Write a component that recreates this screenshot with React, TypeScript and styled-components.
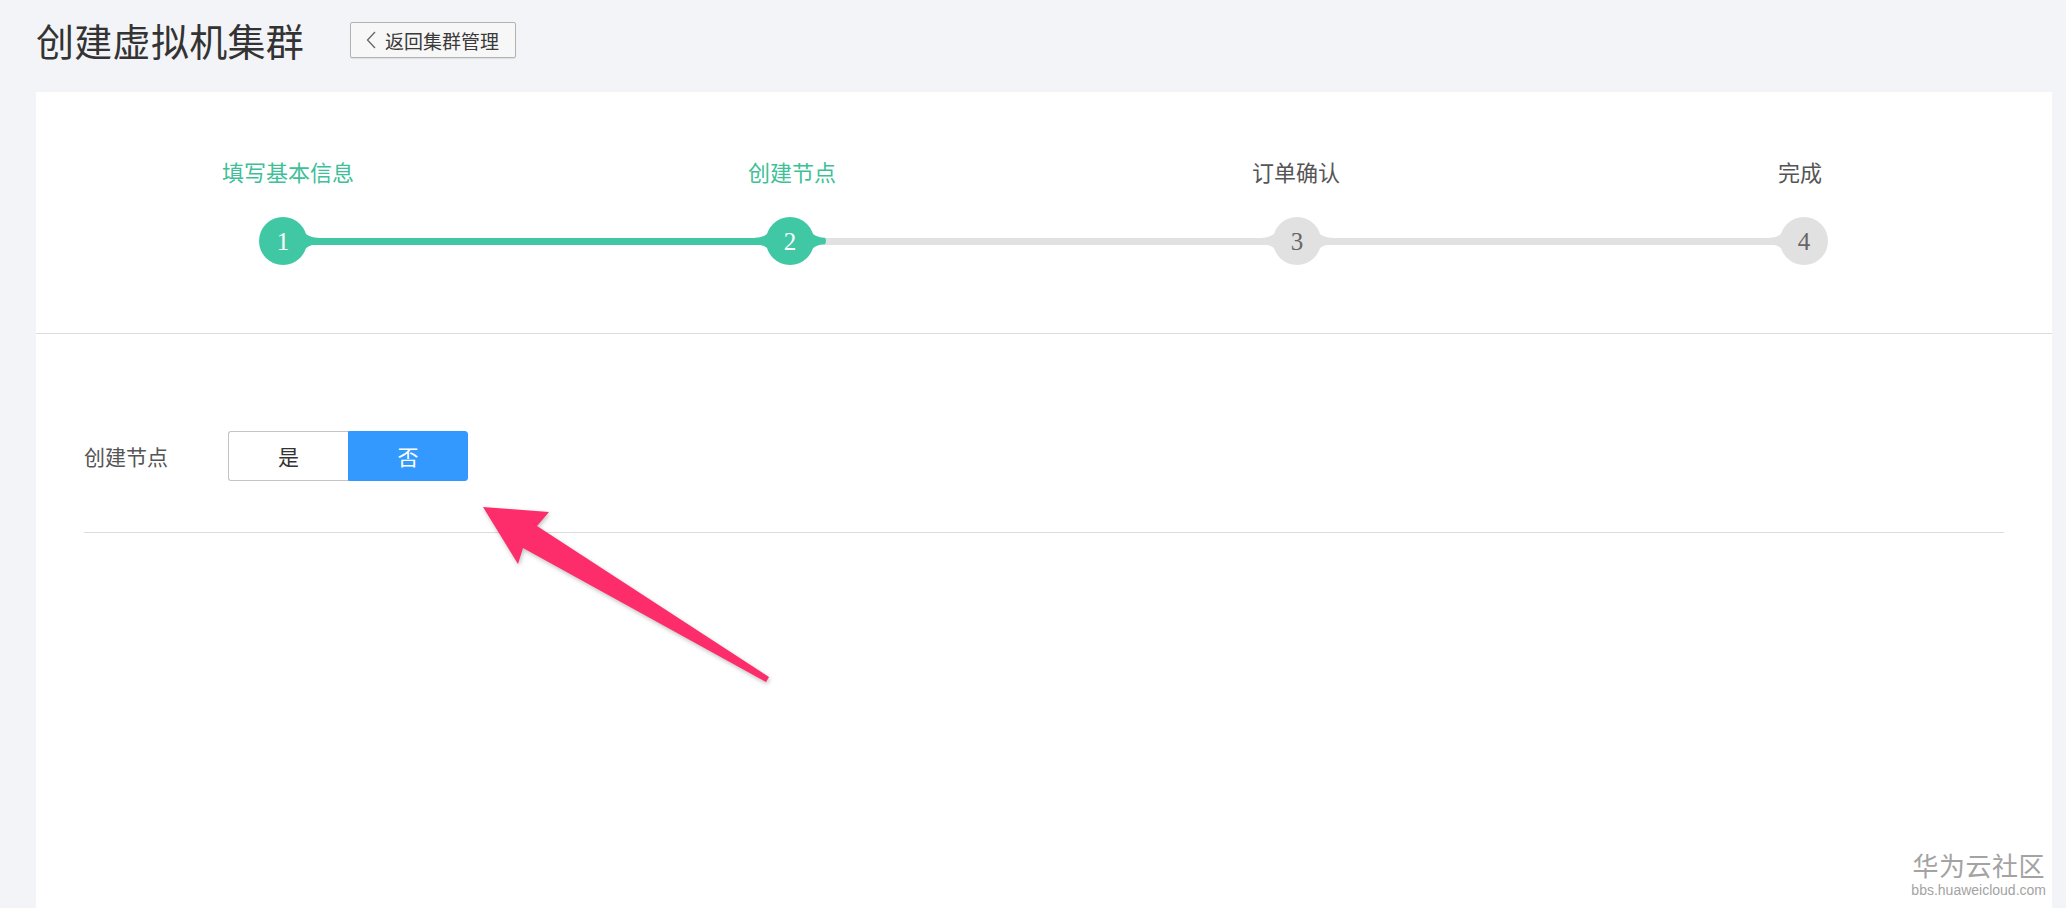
import React from "react";
import styled, { createGlobalStyle } from "styled-components";

const GlobalStyle = createGlobalStyle`
  html, body { margin: 0; padding: 0; }
  body {
    background: #f3f4f7;
    font-family: "Noto Sans CJK SC", "Noto Sans", sans-serif;
  }
`;

const GREEN = "#40c8a5";
const GREEN_TEXT = "#3fbf98";
const GRAY = "#e1e1e1";

const Page = styled.div`
  position: relative;
  min-height: 100vh;
  background: #f3f4f7;
  display: flex;
  flex-direction: column;
`;

const Header = styled.header`
  height: 80px;
  padding-left: 36px;
  display: flex;
  align-items: center;
  gap: 46px;
`;

const Title = styled.h1`
  margin: 0;
  font-size: 38px;
  font-weight: 400;
  line-height: 1;
  color: #333;
  letter-spacing: 0.3px;
`;

const BackButton = styled.button`
  height: 36px;
  width: 166px;
  box-sizing: border-box;
  border: 1px solid #b3b3b3;
  border-radius: 2px;
  background: #f7f7f7;
  box-shadow: 0 1px 1px rgba(0, 0, 0, 0.08);
  display: flex;
  align-items: center;
  padding: 0 0 0 15px;
  gap: 9px;
  font-family: "Noto Sans CJK SC", sans-serif;
  font-size: 19px;
  color: #3a3a3a;
  cursor: pointer;
`;

const Card = styled.main`
  margin: 12px 14px 0 36px;
  flex: 1;
  background: #fff;
  display: flex;
  flex-direction: column;
`;

const StepperSection = styled.section`
  height: 242px;
  box-sizing: border-box;
  border-bottom: 1px solid #dcdcdc;
  padding-top: 64px;
`;

const StepLabels = styled.div`
  display: grid;
  grid-template-columns: repeat(4, 1fr);
`;

const StepLabel = styled.div<{ $done: boolean }>`
  text-align: center;
  font-size: 22px;
  line-height: 30px;
  color: ${(p) => (p.$done ? GREEN_TEXT : "#555")};
`;

const Track = styled.div`
  margin-top: 31px;
  display: flex;
  align-items: center;
  padding: 0 224px 0 223px;
`;

const Connector = styled.div<{ $done: boolean }>`
  flex: 1;
  height: 7px;
  background: ${(p) => (p.$done ? GREEN : GRAY)};
`;

const Node = styled.div<{ $done: boolean }>`
  position: relative;
  z-index: 1;
  flex: none;
  width: 48px;
  height: 48px;
  border-radius: 50%;
  background: ${(p) => (p.$done ? GREEN : GRAY)};
  color: ${(p) => (p.$done ? "#fff" : "#666")};
  display: flex;
  align-items: center;
  justify-content: center;
  font-family: "Liberation Serif", serif;
  font-size: 25px;
  line-height: 1;
`;

const Tips = styled.svg`
  position: absolute;
  left: -11px;
  top: 0;
  z-index: -1;
  overflow: visible;
`;

const FormSection = styled.section`
  padding: 97px 48px 0 48px;
`;

const FormRow = styled.div`
  display: flex;
  align-items: center;
  height: 50px;
`;

const FieldLabel = styled.label`
  width: 144px;
  font-size: 21px;
  color: #555;
`;

const Segmented = styled.div`
  display: flex;
`;

const Segment = styled.button<{ $active: boolean; $first: boolean }>`
  width: 120px;
  height: 50px;
  box-sizing: border-box;
  font-family: "Noto Sans CJK SC", sans-serif;
  font-size: 21px;
  cursor: pointer;
  border: 1px solid ${(p) => (p.$active ? "#3399ff" : "#c4c4c4")};
  border-right-width: ${(p) => (p.$first ? 0 : 1)}px;
  border-radius: ${(p) => (p.$first ? "3px 0 0 3px" : "0 3px 3px 0")};
  background: ${(p) => (p.$active ? "#3399ff" : "#fff")};
  color: ${(p) => (p.$active ? "#fff" : "#333")};
`;

const FormDivider = styled.hr`
  margin: 51px 0 0 0;
  border: 0;
  border-top: 1px solid #dcdcdc;
`;

const Watermark = styled.div`
  position: absolute;
  right: 20px;
  bottom: 9px;
  display: flex;
  flex-direction: column;
  align-items: center;
  color: #a3a3a3;
  pointer-events: none;
`;

const WatermarkTitle = styled.div`
  font-size: 26px;
  line-height: 32px;
  letter-spacing: 0.5px;
`;

const WatermarkUrl = styled.div`
  font-family: "Liberation Sans", Arial, sans-serif;
  font-size: 14px;
  line-height: 18px;
`;

const ArrowSvg = styled.svg`
  position: absolute;
  left: 470px;
  top: 495px;
  overflow: visible;
  filter: drop-shadow(1px 2px 2px rgba(0, 0, 0, 0.25));
`;

const steps = ["填写基本信息", "创建节点", "订单确认", "完成"];
const current = 1;

function StepNode({ index }: { index: number }) {
  const done = index <= current;
  const color = done ? GREEN : GRAY;
  const hasLeft = index > 0;
  const hasRight = index < steps.length - 1;
  return (
    <Node $done={done}>
      <Tips width="70" height="48" viewBox="-11 0 70 48">
        {hasLeft && (
          <path
            d="M8 9 C3 16 -1 20.5 -11 20.8 L -11 27.2 C -1 27.5 3 32 8 39 Z"
            fill={color}
          />
        )}
        {hasRight && (
          <path
            d="M40 9 C45 16 49 20.5 59 20.8 Q 61 24 59 27.2 C 49 27.5 45 32 40 39 Z"
            fill={color}
          />
        )}
      </Tips>
      {index + 1}
    </Node>
  );
}

export default function App() {
  return (
    <>
      <GlobalStyle />
      <Page>
        <Header>
          <Title>创建虚拟机集群</Title>
          <BackButton>
            <svg width="10" height="18" viewBox="0 0 10 18">
              <polyline
                points="9,1 1.5,9 9,17"
                fill="none"
                stroke="#666"
                strokeWidth="1.3"
              />
            </svg>
            返回集群管理
          </BackButton>
        </Header>
        <Card>
          <StepperSection>
            <StepLabels>
              {steps.map((s, i) => (
                <StepLabel key={s} $done={i <= current}>
                  {s}
                </StepLabel>
              ))}
            </StepLabels>
            <Track>
              {steps.map((s, i) => (
                <React.Fragment key={s}>
                  {i > 0 && <Connector $done={i <= current} />}
                  <StepNode index={i} />
                </React.Fragment>
              ))}
            </Track>
          </StepperSection>
          <FormSection>
            <FormRow>
              <FieldLabel>创建节点</FieldLabel>
              <Segmented>
                <Segment $active={false} $first={true}>
                  是
                </Segment>
                <Segment $active={true} $first={false}>
                  否
                </Segment>
              </Segmented>
            </FormRow>
            <FormDivider />
          </FormSection>
        </Card>
        <ArrowSvg width="310" height="200" viewBox="0 0 310 200">
          <polygon
            points="13,12 79,17 67,31 299,182 296,187 53,53 48,69"
            fill="#fd2d6b"
          />
        </ArrowSvg>
        <Watermark>
          <WatermarkTitle>华为云社区</WatermarkTitle>
          <WatermarkUrl>bbs.huaweicloud.com</WatermarkUrl>
        </Watermark>
      </Page>
    </>
  );
}
